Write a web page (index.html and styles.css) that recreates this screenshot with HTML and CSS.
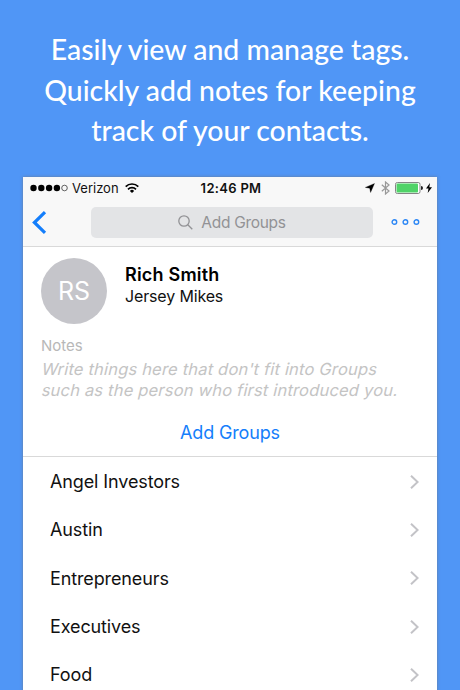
FILE: index.html
```html
<!DOCTYPE html>
<html lang="en">
<head>
<meta charset="utf-8">
<meta name="viewport" content="width=device-width, initial-scale=1">
<title>Contact tags</title>
<link rel="stylesheet" href="styles.css">
</head>
<body>

<h1 class="headline">Easily view and manage tags.<br>Quickly add notes for keeping<br>track of your contacts.</h1>

<div class="phone">
    <div class="status">
        <div class="carrier">
            <svg width="39" height="8" viewBox="0 0 39 8">
                <circle cx="3.5" cy="4" r="3.2"/>
                <circle cx="11.3" cy="4" r="3.2"/>
                <circle cx="19.1" cy="4" r="3.2"/>
                <circle cx="26.9" cy="4" r="3.2"/>
                <circle cx="34.5" cy="4" r="2.8" fill="none" stroke="#222" stroke-width=".7"/>
            </svg>
            <span class="carrier-name">Verizon</span>
            <svg class="wifi" width="14" height="10" viewBox="0 0 14 10" fill="none" stroke="#000" stroke-width="1.7">
                <path d="M.7 3.6a8.9 8.9 0 0 1 12.6 0M3 6.3a5.6 5.6 0 0 1 8 0"/>
                <path d="M7 10L4.9 7.9a3 3 0 0 1 4.2 0z" fill="#000" stroke="none"/>
            </svg>
        </div>
        <span class="time">12:46 PM</span>
        <div class="indicators">
            <svg width="10" height="10" viewBox="0 0 10 10">
                <path d="M9.5 .5L5.6 9.5L4.7 5.3L.3 4.4z" stroke="#000" stroke-width=".3"/>
            </svg>
            <svg class="bluetooth" width="9" height="14" viewBox="0 0 9 14" fill="none" stroke="#999" stroke-width="1.2">
                <path d="M.8 3.8L8 10L4.5 13V1L8 4L.8 10.2"/>
            </svg>
            <svg class="battery" width="28" height="12" viewBox="0 0 28 12">
                <rect x=".5" y=".5" width="24.5" height="11" rx="1.8" fill="#fff" stroke="#858585"/>
                <rect x="1.5" y="1.5" width="21.5" height="9" rx="1" fill="#50d368"/>
                <path d="M26 4a2 2 0 0 1 0 4z" fill="#222"/>
            </svg>
            <svg class="bolt" width="6" height="10" viewBox="0 0 6 10">
                <path d="M4 0L0 5.6h2.5L1.7 10L6 4.2H3.3z"/>
            </svg>
        </div>
    </div>

    <div class="nav">
        <svg class="back" width="15" height="23" viewBox="0 0 15 23" fill="none" stroke="#147efb" stroke-width="3.2">
            <path d="M13 1.2L2.4 11.5L13 21.8"/>
        </svg>
        <div class="search">
            <svg width="15" height="15" viewBox="0 0 15 15" fill="none" stroke="#929295" stroke-width="1.3">
                <circle cx="6" cy="6" r="5.2"/>
                <path d="M9.8 9.8L14.3 14.3"/>
            </svg>
            <span>Add Groups</span>
        </div>
        <svg class="more" width="29" height="7" viewBox="0 0 29 7" fill="none" stroke="#2c87f5" stroke-width="1.4">
            <circle cx="3.4" cy="3" r="2.3"/>
            <circle cx="14.4" cy="3" r="2.3"/>
            <circle cx="25.4" cy="3" r="2.3"/>
        </svg>
    </div>

    <div class="contact">
        <div class="person">
            <div class="avatar">RS</div>
            <div>
                <div class="name">Rich Smith</div>
                <div class="company">Jersey Mikes</div>
            </div>
        </div>
        <div class="notes-label">Notes</div>
        <p class="notes"><span>Write things here that don't fit into Groups</span> <span>such as the person who first introduced you.</span></p>
        <div class="add-groups">Add Groups</div>
    </div>

    <ul class="groups">
        <li><span>Angel Investors</span><svg width="9" height="14" viewBox="0 0 9 14"><path d="M1 .8L7.6 7L1 13.2"/></svg></li>
        <li><span>Austin</span><svg width="9" height="14" viewBox="0 0 9 14"><path d="M1 .8L7.6 7L1 13.2"/></svg></li>
        <li><span>Entrepreneurs</span><svg width="9" height="14" viewBox="0 0 9 14"><path d="M1 .8L7.6 7L1 13.2"/></svg></li>
        <li><span>Executives</span><svg width="9" height="14" viewBox="0 0 9 14"><path d="M1 .8L7.6 7L1 13.2"/></svg></li>
        <li><span>Food</span><svg width="9" height="14" viewBox="0 0 9 14"><path d="M1 .8L7.6 7L1 13.2"/></svg></li>
    </ul>
</div>

</body>
</html>
```
FILE: styles.css
```css
* {
  box-sizing: border-box;
}

body {
  margin: 0;
  height: 690px;
  overflow: hidden;
  background: #5096f6;
  color: #111;
  font-family: Inter, "Liberation Sans", sans-serif;
}

svg {
  display: block;
  flex: none;
}

.headline {
  margin: 0;
  height: 177px;
  padding-top: 29px;
  color: #fff;
  font: 500 28.4px/40.5px Lato, sans-serif;
  text-align: center;
  white-space: nowrap;
}

.phone {
  width: 414px;
  height: 520px;
  margin: 0 auto;
  background: #fff;
  box-shadow: 0 0 3px rgba(110, 120, 140, 0.9);
}

/* Status bar */
.status {
  display: grid;
  grid-template-columns: 1fr auto 1fr;
  align-items: center;
  height: 22px;
  padding: 0 5px 0 7px;
  background: #f8f8f8;
  font-size: 13px;
}

.carrier,
.indicators {
  display: flex;
  align-items: center;
}

.carrier-name {
  margin-left: 3px;
}

.wifi {
  margin-left: 6px;
}

.time {
  font-weight: 600;
  letter-spacing: 0.3px;
}

.indicators {
  justify-content: flex-end;
}

.bluetooth {
  margin-left: 6px;
}

.battery {
  margin-left: 5px;
}

.bolt {
  margin-left: 3px;
}

/* Navigation bar */
.nav {
  display: flex;
  align-items: center;
  height: 48px;
  padding: 0 17px 0 9px;
  background: #f8f8f8;
  border-bottom: 1px solid #d9d9d9;
}

.search {
  display: flex;
  align-items: center;
  justify-content: center;
  gap: 8px;
  width: 282px;
  height: 31px;
  margin-left: 44px;
  border-radius: 5px;
  background: #e3e4e6;
  color: #929295;
  font-size: 15.5px;
  letter-spacing: -0.3px;
}

.more {
  margin-left: auto;
}

/* Contact details */
.contact {
  height: 210px;
  padding: 11px 18px 0;
  border-bottom: 1px solid #d9d9d9;
}

.person {
  display: flex;
  gap: 18px;
}

.avatar {
  width: 66px;
  height: 66px;
  border-radius: 50%;
  background: #c5c5ca;
  color: #fff;
  font-size: 25px;
  line-height: 66px;
  text-align: center;
}

.name {
  margin-top: 6px;
  color: #000;
  font-size: 18px;
  font-weight: 600;
  letter-spacing: 0.2px;
  line-height: 22px;
}

.company {
  font-size: 16px;
  letter-spacing: -0.15px;
  line-height: 21px;
}

.notes-label {
  margin-top: 12px;
  color: #b8b8b8;
  font-size: 15px;
  line-height: 20px;
}

.notes {
  margin: 3px 0 0 1px;
  color: #c4c4c4;
  font-size: 16.5px;
  letter-spacing: 0.19px;
  line-height: 20.5px;
  white-space: nowrap;
}

/* Slanted roman letters instead of the italic face */
.notes span {
  display: block;
  transform: skewX(-13deg);
}

.add-groups {
  margin-top: 21px;
  color: #147efb;
  font-size: 18px;
  letter-spacing: -0.15px;
  line-height: 24px;
  text-align: center;
}

/* Group list */
.groups {
  margin: 0;
  padding: 0;
  list-style: none;
}

.groups li {
  display: flex;
  align-items: center;
  justify-content: space-between;
  height: 48.3px;
  padding: 1px 18px 0 27px;
  font-size: 18px;
  letter-spacing: -0.12px;
}

.groups path {
  fill: none;
  stroke: #c3c3c7;
  stroke-width: 2;
}
```
